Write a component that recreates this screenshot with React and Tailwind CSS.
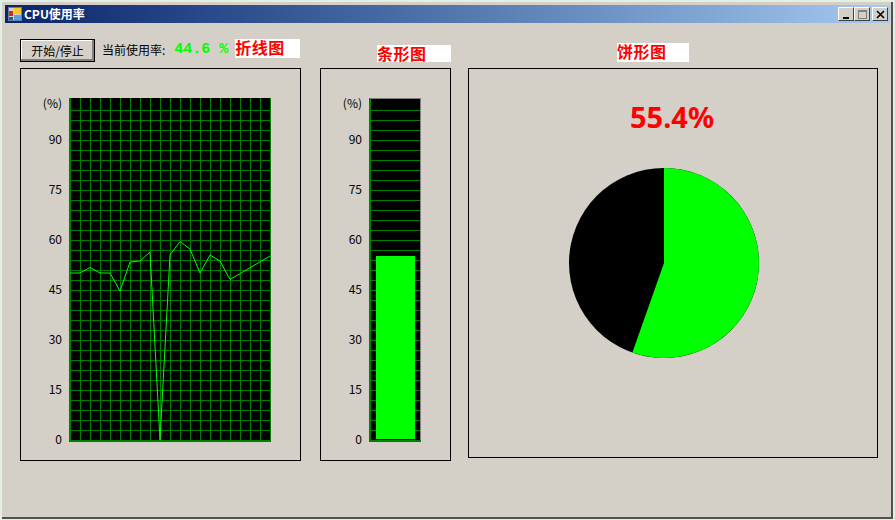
import React from 'react';

const cjk = { fontFamily: '"Noto Sans CJK SC", sans-serif' };

const ticks = [
    { label: '90', y: 144 },
    { label: '75', y: 194 },
    { label: '60', y: 244 },
    { label: '45', y: 294 },
    { label: '30', y: 344 },
    { label: '15', y: 394 },
    { label: '0', y: 444 },
];

const history = '70,273 80,273 90,267.5 100,273 110,273 120,291 130,262 140,261 150,252 160,440 170,255 180,241.5 190,249 200,273 210,255 220,261 230,279.5 270,256';

const range = (from, to, step) => {
    const out = [];
    for (let v = from; v <= to; v += step) out.push(v);
    return out;
};

const AxisLabels = ({ right }) => (
    <g fontSize="12" fill="#000" textAnchor="end" style={cjk}>
        <text x={right} y={108}>(%)</text>
        {ticks.map((t) => (
            <text key={t.label} x={right} y={t.y}>{t.label}</text>
        ))}
    </g>
);

const LineChart = () => (
    <svg width="242" height="356" viewBox="30 95 242 356" className="block ml-[9px] mt-[26px]">
        <AxisLabels right={62} />
        <rect x="70" y="98" width="200" height="343" fill="#000" />
        <g stroke="#008000" strokeWidth="1" shapeRendering="crispEdges">
            {range(110, 440, 10).map((y) => (
                <line key={y} x1="70" x2="271" y1={y + 0.5} y2={y + 0.5} />
            ))}
            {range(80, 270, 10).map((x) => (
                <line key={x} x1={x + 0.5} x2={x + 0.5} y1="98" y2="441" />
            ))}
            <rect x="69" y="98" width="2" height="344" fill="#008000" stroke="none" />
            <rect x="69" y="440" width="202" height="2" fill="#008000" stroke="none" />
        </g>
        <polyline points={history} fill="none" stroke="#00ff00" strokeWidth="1" />
    </svg>
);

const BarChart = () => (
    <svg width="102" height="356" viewBox="330 95 102 356" className="block ml-[9px] mt-[26px]">
        <AxisLabels right={362} />
        <rect x="370" y="98" width="50" height="343" fill="#000" />
        <g stroke="#008000" strokeWidth="1" shapeRendering="crispEdges">
            {range(110, 440, 10).map((y) => (
                <line key={y} x1="370" x2="420" y1={y + 0.5} y2={y + 0.5} />
            ))}
            <rect x="369" y="98" width="2" height="344" fill="#008000" stroke="none" />
            <rect x="369" y="440" width="52" height="2" fill="#008000" stroke="none" />
        </g>
        <rect x="420" y="98" width="1" height="342" fill="#808080" shapeRendering="crispEdges" />
        <rect x="370" y="98" width="50" height="1" fill="#808080" shapeRendering="crispEdges" />
        <rect x="376" y="256" width="39" height="183" fill="#00ff00" shapeRendering="crispEdges" />
    </svg>
);

const PieChart = () => (
    <svg width="192" height="192" viewBox="0 0 192 192" className="block ml-[99px] mt-[32px]">
        <circle cx="96" cy="96" r="95" fill="#000" />
        <path d="M96 96 L96 1 A95 95 0 1 1 64.4 185.6 Z" fill="#00ff00" />
    </svg>
);

const AppIcon = () => (
    <svg width="14" height="14" viewBox="0 0 14 14" className="block" shapeRendering="crispEdges">
        <rect width="14" height="14" fill="#6b7f9c" />
        <rect x="1" y="1" width="12" height="12" fill="#d4d0c8" />
        <rect x="6" y="1" width="7" height="6" fill="#f8c820" />
        <rect x="1" y="4" width="4" height="5" fill="#c83020" />
        <rect x="6" y="8" width="7" height="5" fill="#58a0e8" />
        <rect x="1" y="10" width="4" height="3" fill="#405878" />
    </svg>
);

const CaptionBtn = ({ children, className = '' }) => (
    <div className={`w-[16px] h-[14px] bg-[#d4d0c8] border-t border-l border-t-white border-l-white border-r border-b border-r-[#404040] border-b-[#404040] flex items-center justify-center ${className}`}>
        {children}
    </div>
);

const Caption = ({ text, className }) => (
    <div className={`bg-white text-[#ff0000] font-bold text-[16px] tracking-[0.5px] leading-[17px] whitespace-nowrap ${className}`} style={cjk}>
        {text}
    </div>
);

export default function App() {
    return (
        <div className="w-[895px] h-[520px] bg-[#e4efe4] pl-[2px] pt-[2px] overflow-hidden">
            <div className="w-[891px] h-[517px] bg-[#d4d0c8] border-r-2 border-b-2 border-r-[#505050] border-b-[#505050] pt-[3px] pl-[3px]">
                <div className="w-[885px] h-[18px] flex items-center pl-[3px] pr-[2px] bg-gradient-to-r from-[#0a246a] to-[#a6caf0]">
                    <AppIcon />
                    <span className="ml-[2px] text-white text-[12px] font-bold leading-none" style={cjk}>CPU使用率</span>
                    <div className="ml-auto flex items-center">
                        <CaptionBtn>
                            <div className="w-[6px] h-[2px] bg-black mt-[7px] mr-[1px]" />
                        </CaptionBtn>
                        <CaptionBtn>
                            <div className="w-[9px] h-[9px] border border-[#808080] border-t-2" />
                        </CaptionBtn>
                        <CaptionBtn className="ml-[2px]">
                            <svg width="9" height="9" viewBox="0 0 9 9">
                                <path d="M1 1 L8 8 M8 1 L1 8" stroke="#000" strokeWidth="1.6" />
                            </svg>
                        </CaptionBtn>
                    </div>
                </div>

                <div className="flex pl-[15px] mt-[16px]">
                    <div className="w-[281px]">
                        <div className="h-[29px] flex items-start">
                            <button className="w-[75px] h-[23px] bg-[#d4d0c8] border border-black shadow-[inset_-2px_-2px_0_#808080,inset_1px_1px_0_#fff] text-[12px] leading-none text-black" style={cjk}>
                                开始/停止
                            </button>
                            <span className="ml-[7px] mt-[3px] text-[12px] leading-[15px] text-black whitespace-nowrap" style={cjk}>当前使用率:</span>
                            <span className="ml-[9px] mt-[2px] text-[15px] leading-[18px] font-bold text-[#00ff00] whitespace-pre" style={{ fontFamily: '"Liberation Mono", monospace' }}>44.6 %</span>
                            <Caption text="折线图" className="ml-[7px] w-[65px] h-[19px]" />
                        </div>
                        <div className="h-[393px] border border-black">
                            <LineChart />
                        </div>
                    </div>

                    <div className="w-[131px] ml-[19px]">
                        <div className="h-[29px] pt-[6px] flex justify-end">
                            <Caption text="条形图" className="w-[74px] h-[17px]" />
                        </div>
                        <div className="h-[393px] border border-black">
                            <BarChart />
                        </div>
                    </div>

                    <div className="w-[410px] ml-[17px]">
                        <div className="h-[29px] pt-[4px] pl-[149px]">
                            <Caption text="饼形图" className="w-[72px] h-[19px]" />
                        </div>
                        <div className="h-[390px] border border-black">
                            <div className="mt-[30px] pl-[161px] h-[36px] text-[29px] leading-[36px] font-bold text-[#ff0000]" style={{ fontFamily: '"Noto Sans", sans-serif' }}>
                                55.4%
                            </div>
                            <PieChart />
                        </div>
                    </div>
                </div>
            </div>
        </div>
    );
}
